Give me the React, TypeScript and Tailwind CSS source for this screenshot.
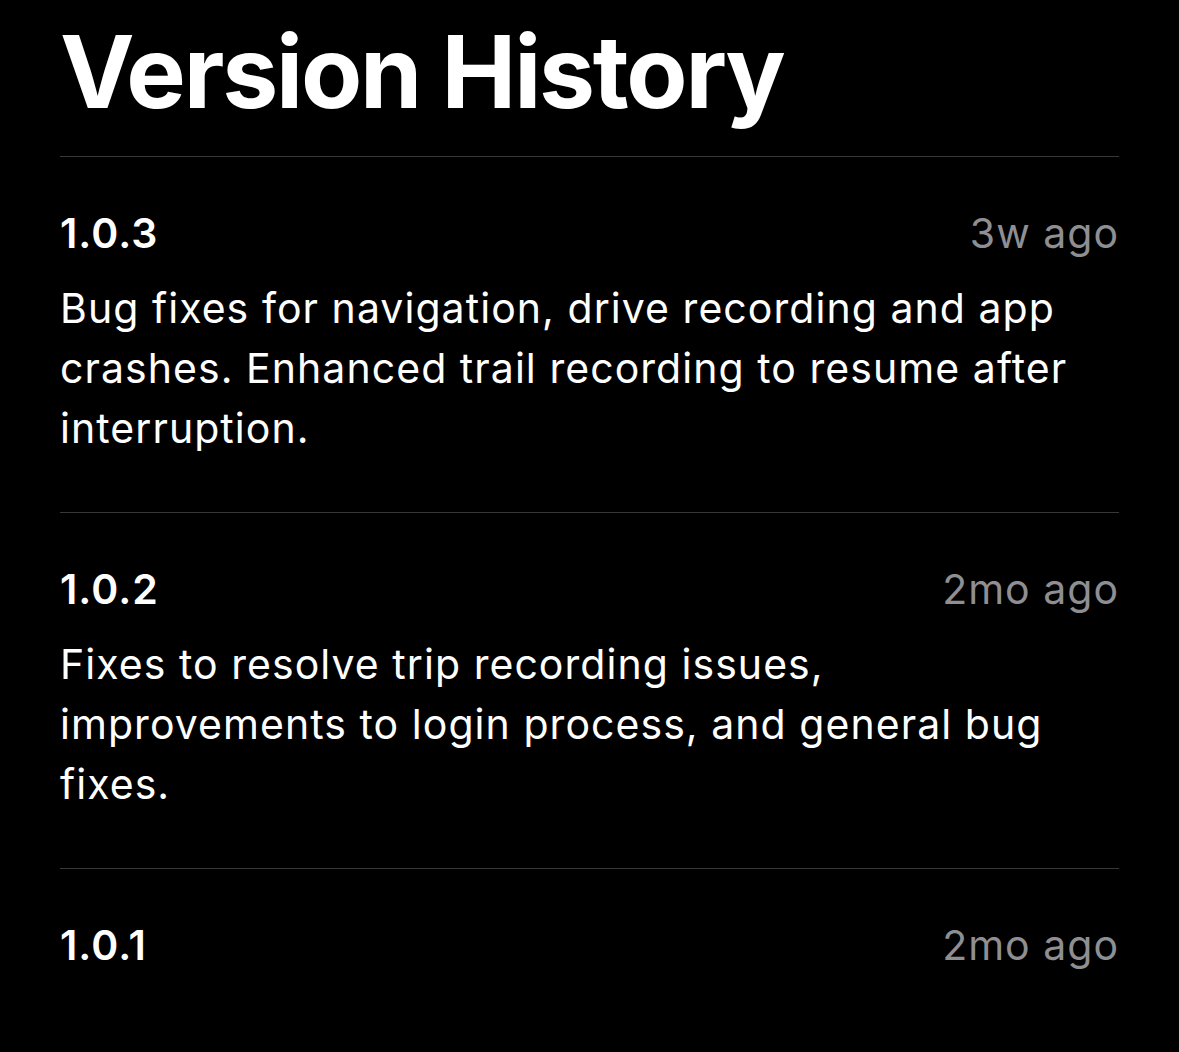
const versions = [
  {
    version: "1.0.3",
    date: "3w ago",
    notes: [
      "Bug fixes for navigation, drive recording and app",
      "crashes. Enhanced trail recording to resume after",
      "interruption.",
    ],
  },
  {
    version: "1.0.2",
    date: "2mo ago",
    notes: [
      "Fixes to resolve trip recording issues,",
      "improvements to login process, and general bug",
      "fixes.",
    ],
  },
  {
    version: "1.0.1",
    date: "2mo ago",
    notes: [],
  },
];

const App = () => {
  return (
    <main className="min-h-[1052px] w-full overflow-hidden bg-black px-[60px] pt-[22px] font-['Inter','Noto_Sans',sans-serif] text-white antialiased">
      {/* Title */}
      <h1 className="text-[100px] leading-[100px] font-bold tracking-[-2.2px]">
        Version History
      </h1>

      {/* Entries */}
      <div className="mt-[34px]">
        {versions.map((item) => (
          <section
            key={item.version}
            className="border-t border-[#38383a] pt-[46px] pb-[54px]"
          >
            <div className="flex items-center justify-between text-[41px] leading-[60px] tracking-[1px]">
              <span className="font-semibold">{item.version}</span>
              <span className="text-[#8e8e93]">{item.date}</span>
            </div>
            {item.notes.length > 0 && (
              <p className="mt-[15px] text-[41px] leading-[60px] tracking-[1.05px]">
                {item.notes.map((line) => (
                  <span key={line} className="block whitespace-nowrap">
                    {line}
                  </span>
                ))}
              </p>
            )}
          </section>
        ))}
      </div>
    </main>
  );
};

export default App;
